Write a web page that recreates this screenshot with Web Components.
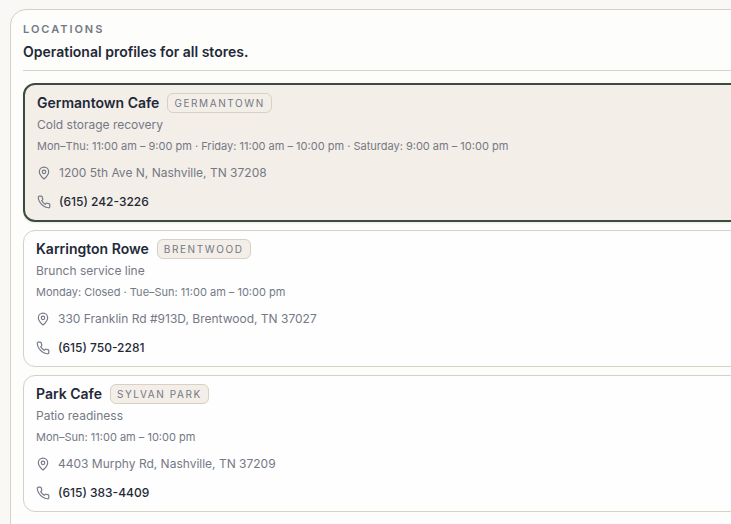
<!DOCTYPE html>
<html lang="en">
<head>
<meta charset="utf-8">
<meta name="viewport" content="width=device-width, initial-scale=1">
<title>Locations</title>
<style>
  :root {
    --ink: #1f2937;
    --muted: #747985;
    --line: #d6d0c5;
    --sand: #f3eee8;
    --accent: #3a4d3b;
  }
  body {
    margin: 0;
    padding: 9px 0 0 10px;
    min-height: 100vh;
    box-sizing: border-box;
    overflow: hidden;
    background: #f9f8f7;
    color: var(--ink);
    font-family: Inter, "Liberation Sans", sans-serif;
  }
</style>
</head>
<body>
<locations-panel>
  <span slot="eyebrow">Locations</span>
  <span slot="title">Operational profiles for all stores.</span>
  <location-card selected>
    <span slot="name">Germantown Cafe</span>
    <area-tag slot="tag">Germantown</area-tag>
    <span slot="focus">Cold storage recovery</span>
    <span slot="hours">Mon–Thu: 11:00 am – 9:00 pm · Friday: 11:00 am – 10:00 pm · Saturday: 9:00 am – 10:00 pm</span>
    <contact-row slot="contact" icon="pin">1200 5th Ave N, Nashville, TN 37208</contact-row>
    <contact-row slot="contact" icon="phone" href="tel:+16152423226">(615) 242-3226</contact-row>
  </location-card>
  <location-card>
    <span slot="name">Karrington Rowe</span>
    <area-tag slot="tag">Brentwood</area-tag>
    <span slot="focus">Brunch service line</span>
    <span slot="hours">Monday: Closed · Tue–Sun: 11:00 am – 10:00 pm</span>
    <contact-row slot="contact" icon="pin">330 Franklin Rd #913D, Brentwood, TN 37027</contact-row>
    <contact-row slot="contact" icon="phone" href="tel:+16157502281">(615) 750-2281</contact-row>
  </location-card>
  <location-card>
    <span slot="name">Park Cafe</span>
    <area-tag slot="tag">Sylvan Park</area-tag>
    <span slot="focus">Patio readiness</span>
    <span slot="hours">Mon–Sun: 11:00 am – 10:00 pm</span>
    <contact-row slot="contact" icon="pin">4403 Murphy Rd, Nashville, TN 37209</contact-row>
    <contact-row slot="contact" icon="phone" href="tel:+16153834409">(615) 383-4409</contact-row>
  </location-card>
</locations-panel>

<script>
const define = (name, markup, setup) => {
  const template = document.createElement('template');
  template.innerHTML = markup;
  customElements.define(name, class extends HTMLElement {
    constructor() {
      super();
      this.attachShadow({ mode: 'open' }).append(template.content.cloneNode(true));
    }
    connectedCallback() {
      if (setup) setup(this, this.shadowRoot);
    }
  });
};

// The panel runs past the right edge of the window.
define('locations-panel', `
  <style>
    :host {
      display: block;
      box-sizing: border-box;
      min-height: calc(100vh + 16px);
      margin-right: -24px;
      padding: 12px;
      border: 1px solid var(--line);
      border-radius: 16px;
      background: #fdfdfb;
    }
    header { padding-bottom: 8px; border-bottom: 1px solid var(--line); }
    p { margin: 0 0 6px; font-size: 11px; line-height: 14px; font-weight: 600; letter-spacing: 0.18em; text-transform: uppercase; color: var(--muted); }
    h2 { margin: 0; font-size: 14px; line-height: 20px; font-weight: 600; }
    section { display: grid; gap: 8px; margin-top: 12px; }
  </style>
  <header>
    <p><slot name="eyebrow"></slot></p>
    <h2><slot name="title"></slot></h2>
  </header>
  <section><slot></slot></section>
`);

define('location-card', `
  <style>
    :host {
      display: block;
      padding: 8px 12px;
      border: 1px solid var(--line);
      border-radius: 12px;
      background: #fefefe;
    }
    :host([selected]) {
      border: 2px solid var(--accent);
      background: var(--sand);
      box-shadow: 0 1px 2px rgba(0, 0, 0, 0.08);
    }
    .head { display: flex; align-items: center; gap: 8px; }
    h3 { margin: 0; font-size: 14px; line-height: 20px; font-weight: 600; }
    p { margin: 2px 0 0; color: var(--muted); }
    .focus { font-size: 12px; line-height: 20px; }
    .hours { font-size: 11px; line-height: 18px; }
    .contacts { display: grid; gap: 9px; margin-top: 8px; }
  </style>
  <div class="head"><h3><slot name="name"></slot></h3><slot name="tag"></slot></div>
  <p class="focus"><slot name="focus"></slot></p>
  <p class="hours"><slot name="hours"></slot></p>
  <div class="contacts"><slot name="contact"></slot></div>
`);

define('area-tag', `
  <style>
    :host {
      display: block;
      padding: 0 6px;
      border: 1px solid var(--line);
      border-radius: 6px;
      background: var(--sand);
      color: var(--muted);
      font-size: 10px;
      line-height: 18px;
      letter-spacing: 0.16em;
      text-transform: uppercase;
    }
  </style>
  <slot></slot>
`);

const icons = {
  pin: '<path d="M20 10c0 5-5.5 10.2-7.4 11.8a1 1 0 0 1-1.2 0C9.500 20.200 4 15 4 10a8 8 0 0 1 16 0"/><circle cx="12" cy="10" r="3"/>',
  phone: '<path d="M22 16.920v3a2 2 0 0 1-2.180 2 19.790 19.790 0 0 1-8.630-3.070 19.500 19.500 0 0 1-6-6A19.790 19.790 0 0 1 2.120 4.180 2 2 0 0 1 4.110 2h3a2 2 0 0 1 2 1.720c.127.960.361 1.903.7 2.810a2 2 0 0 1-.450 2.110L8.090 9.910a16 16 0 0 0 6 6l1.270-1.270a2 2 0 0 1 2.110-.450c.907.339 1.850.573 2.810.7A2 2 0 0 1 22 16.920z"/>'
};

define('contact-row', `
  <style>
    :host { display: flex; align-items: center; gap: 8px; font-size: 12px; line-height: 20px; color: var(--muted); }
    svg { flex: none; width: 14px; height: 14px; fill: none; stroke: var(--muted); stroke-width: 2; stroke-linecap: round; stroke-linejoin: round; }
    a { color: var(--ink); font-weight: 500; text-decoration: none; }
  </style>
  <svg viewBox="0 0 24 24" aria-hidden="true"></svg>
  <span><slot></slot></span>
`, (host, root) => {
  root.querySelector('svg').innerHTML = icons[host.getAttribute('icon')];
  const span = root.querySelector('span');
  if (host.hasAttribute('href') && span) {
    const link = document.createElement('a');
    link.href = host.getAttribute('href');
    link.append(...span.childNodes);
    span.replaceWith(link);
  }
});
</script>
</body>
</html>
